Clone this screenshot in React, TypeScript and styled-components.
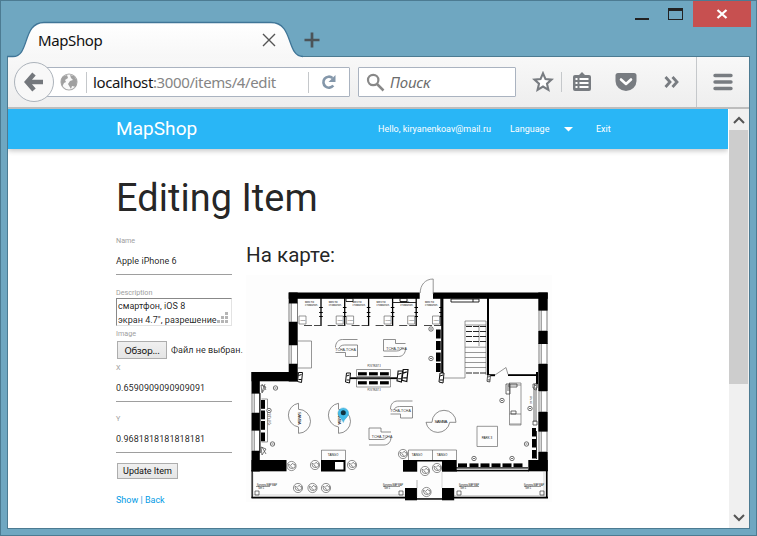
import React from 'react';
import styled, { createGlobalStyle, css } from 'styled-components';

const GlobalStyle = createGlobalStyle`
  * { box-sizing: border-box; }
  body { margin: 0; background: #6fa7c1; overflow: hidden; }
`;

const uiFont = css`font-family: "Noto Sans", "Open Sans", sans-serif;`;

const Window = styled.div`
  width: 757px; height: 536px; display: flex; flex-direction: column;
  background: #6fa7c1; border: 1px solid #4c7b92; padding: 0 6px 6px;
`;
const TitleBar = styled.div`
  height: 55px; flex: none; display: flex; justify-content: space-between; align-items: flex-start;
`;
const TabStrip = styled.div`display: flex; height: 56px; padding-top: 19px;`;
const TabShape = styled.div`
  position: relative; width: 302px; height: 37px; z-index: 1;
`;
const TabOutline = styled.svg`position: absolute; left: 0; top: 0; overflow: visible;`;
const TabContent = styled.div`
  position: relative; display: flex; align-items: center; justify-content: space-between;
  padding: 0 33px 0 31px; height: 40px;
`;
const TabTitle = styled.span`
  ${uiFont} font-size: 15px; line-height: 20px; letter-spacing: -.4px; color: #111;
`;
const NewTab = styled.svg`margin: 12px 0 0 -5px;`;
const WindowButtons = styled.div`display: flex; height: 26px; margin-right: -1px;`;
const CloseButton = styled.div`
  width: 58px; height: 26px; background: #c75050;
  display: flex; align-items: center; justify-content: center;
`;
const Client = styled.div`
  flex: 1; min-height: 0; border: 1px solid #4c7b92; display: flex; flex-direction: column; background: #fff;
`;
const Toolbar = styled.div`
  height: 52px; flex: none; display: flex; align-items: center;
  background: linear-gradient(#f8f8f8, #eeeeee); border-bottom: 2px solid #bdbdbd;
`;
const BackButton = styled.div`
  width: 40px; height: 40px; margin-left: 6px; flex: none; border: 1px solid #acb3bb; border-radius: 50%;
  background: #f8f8f8; display: flex; align-items: center; justify-content: center; z-index: 1;
`;
const Field = styled.div<{ $w: number; $ml: number; $pl: number }>`
  width: ${p => p.$w}px; margin-left: ${p => p.$ml}px; padding-left: ${p => p.$pl}px;
  height: 30px; flex: none; background: #fff; border: 1px solid #aab3c0; border-radius: 1px;
  display: flex; align-items: center;
`;
const Address = styled.span`
  ${uiFont} font-size: 15px; line-height: 24px; letter-spacing: -.38px; color: #858585; width: 215px; white-space: nowrap;
  b { font-weight: 400; color: #151515; }
`;
const Placeholder = styled.span`
  ${uiFont} font-size: 15px; line-height: 24px; font-style: italic; color: #6c6c6c; margin-left: 5px; letter-spacing: -.2px;
`;
const Divider = styled.i<{ $h: number; $m: string }>`
  width: 1px; flex: none; height: ${p => p.$h}px; margin: ${p => p.$m}; background: #c5c8cb;
`;
const ToolIcon = styled.svg<{ $ml: number }>`flex: none; margin-left: ${p => p.$ml}px;`;

const Viewport = styled.div`flex: 1; min-height: 0; display: flex;`;
const Page = styled.div`
  width: 720px; height: 419px; overflow: hidden; background: #fff;
  font-family: Roboto, sans-serif; color: rgba(0,0,0,.87);
`;
const NavBar = styled.nav`
  height: 40px; background: #29b6f6; color: #fff; display: flex; align-items: center;
  padding-left: 108px; box-shadow: 0 2px 5px rgba(0,0,0,.22); font-size: 9px;
`;
const Brand = styled.div`font-size: 19px; line-height: 42px; letter-spacing: .06px; width: 262px;`;
const NavItem = styled.div<{ $w: number }>`width: ${p => p.$w}px; white-space: nowrap; line-height: 40px;`;
const Main = styled.main`padding: 0 0 0 108px;`;
const Title = styled.h1`margin: 24px 0 0; height: 51px; font-size: 37.9px; line-height: 51px; font-weight: 400; letter-spacing: .06px;`;
const Columns = styled.div`display: flex; align-items: flex-start;`;
const Form = styled.form`width: 129px; flex: none; padding-top: 12px; display: flex; flex-direction: column; align-items: flex-start;`;
const Label = styled.label<{ $mt: number }>`
  margin-top: ${p => p.$mt}px; height: 10px; line-height: 10px; font-size: 7.2px; color: #9e9e9e;
`;
const Input = styled.div`
  width: 116px; height: 29px; padding-top: 1px; line-height: 28px; border-bottom: 1px solid #9e9e9e;
  font-size: 9px; letter-spacing: .04px;
`;
const Area = styled.div`
  position: relative; width: 116px; height: 28px; padding-left: 1px; overflow: hidden;
  border: 1px solid #e3e3e3; border-top-color: #888; border-left-color: #888;
  font-size: 9px; line-height: 14px; letter-spacing: .03px; white-space: nowrap;
`;
const Grip = styled.svg`position: absolute; right: 3px; bottom: 2px;`;
const FileRow = styled.div`
  display: flex; align-items: center; margin: 2px 0 0 1px; white-space: nowrap; font-size: 9px; letter-spacing: .04px;
`;
const Button = styled.div<{ $w: number; $h: number; $ui?: boolean }>`
  width: ${p => p.$w}px; height: ${p => p.$h}px; margin-right: 4px; border: 1px solid #adadad;
  background: linear-gradient(#f0f0f0, #e5e5e5); color: #111; letter-spacing: 0;
  display: flex; align-items: center; justify-content: center; white-space: nowrap;
  ${p => p.$ui ? css`${uiFont} font-size: 9.5px; letter-spacing: -.2px;` : css`font-size: 9px;`}
`;
const SubmitRow = styled.div`margin: 10px 0 0 1px;`;
const Links = styled.div`margin-top: 14px; font-size: 9px; line-height: 14px; color: #2196dd; a { color: #039be5; }`;
const MapColumn = styled.section`width: 312px;`;
const MapTitle = styled.h4`margin: 17px 0 0 0; padding-left: 1px; height: 28px; font-size: 20.6px; line-height: 28px; font-weight: 400;`;
const Plan = styled.svg`display: block; margin-top: 6px;`;

const ScrollBar = styled.div`
  width: 20px; height: 419px; margin-left: 1px; background: #f0f0f0; display: flex; flex-direction: column; align-items: flex-start;
`;
const ScrollButton = styled.div`width: 19px; height: 21px; flex: none; display: flex; align-items: center; justify-content: center;`;
const Thumb = styled.div`width: 19px; height: 254px; background: #cdcdcd; margin-bottom: auto;`;

const LINE = '#6a6a6a';

/** Solid wall blocks: x, y, width, height */
const walls = [
  [288.7, 292.5, 131, 6.3], [433, 292.5, 114.7, 6.3],
  [288.7, 292.5, 9, 10.8], [288.7, 322, 9, 23], [288.7, 364, 9, 17.5],
  [251.5, 372, 46, 9.3], [251.5, 372, 8.3, 21.5], [251.5, 413, 8.3, 17.5], [251.5, 451, 8.3, 20.5],
  [251.5, 460, 35, 11.3],
  [538.3, 292.5, 9.4, 18], [538.3, 331, 9.4, 13], [538.3, 364, 9.4, 27], [538.3, 412, 9.4, 19.5], [538.3, 452, 9.4, 19],
  [528.3, 460, 19.4, 11.3],
  [321, 460, 24.5, 11.5], [403, 460, 14.2, 11.7], [442, 460, 14.7, 11.7],
  [405, 488, 12, 12.3], [442, 488, 12.2, 12.3],
  [441.2, 298, 2.2, 76], [487, 298, 2, 77], [489, 374.2, 6, 2], [508, 374.2, 29, 1.8], [536, 372, 2, 12],
  [456, 467.3, 72, 1.2], [456, 469.8, 73, 1.6], [417, 460, 25, 1.5], [251.5, 496.7, 154, 1.8], [454, 496.7, 94, 1.8],
  [417, 498.2, 25, 1.5], [251.5, 470, 1.3, 28], [545.9, 470, 1.7, 28],
  [347, 377.3, 50, 1.8], [259.5, 393, 1, 60], [536, 431, .8, 28],
];
const windows: [number, number, number, number][] = [
  [289, 303, 8.5, 19], [289, 345, 8.5, 19], [252, 393, 7.5, 20], [252, 430, 7.5, 21],
  [539, 310, 8, 21], [539, 343, 8, 21], [539, 391, 8, 21], [539, 431, 8, 21],
];
/** Product stands along the walls and on the central island */
const stands = [
  ...[329.5, 341, 352.5, 363].map(y => [436, y, 4.7, 9]),
  ...[400, 410.5, 421, 432.5].map(y => [261, y, 4, 8.8]),
  ...[428, 439, 450].map(y => [532, y, 4, 8.5]),
  ...[458, 469.5, 480.5, 491.5, 502.5, 513.5].map(x => [x, 463.4, 9, 3.7]),
  ...[358, 369, 380].flatMap(x => [[x, 372.2, 8.8, 3.2], [x, 381.2, 8.8, 3.2]]),
];
const chairs = [
  [291.5, 466], [315, 465], [352, 465], [298, 488], [312.5, 488], [326, 488],
  [403, 454], [437, 468], [425, 471], [426.5, 492],
];
const markers = [
  [275.5, 388], [269, 410.5], [272.5, 444], [431, 329], [431, 358.5],
  [502, 400.5], [530, 408.5], [526.5, 444], [474, 458.5], [512, 458.5],
];

function Chair({ x, y }: { x: number; y: number }) {
  return (
    <g transform={`translate(${x} ${y})`} fill="none" stroke="#555" strokeWidth=".65">
      <circle r="4.6" />
      <path d="M-3-1.8l2.2 1.2 2-2.2 1.4 1.7 1-.6v3l-2.6 1.3-2.8-.6-1-2zM-1 .2l2.4 1.7" />
    </g>
  );
}
function Samba({ x, y, turn }: { x: number; y: number; turn?: boolean }) {
  return (
    <g transform={`translate(${x} ${y}) ${turn ? 'rotate(90)' : ''}`}>
      <path d="M-9 0H-15A12 12 0 0 0 8.7 0M-9 0A12 12 0 0 1 15 0H8.7" fill="none" stroke={LINE} strokeWidth=".75" />
      <text x="0" y=".5" fontSize="4.4" textAnchor="middle" fill="#222" textLength="13">SAMBA</text>
    </g>
  );
}
function Tcha({ x, y, flip }: { x: number; y: number; flip?: boolean }) {
  return (
    <g transform={`translate(${x} ${y})`}>
      <path transform={flip ? 'rotate(180)' : undefined}
        d="M11-9H-4C-8-9-11-6-11-1M11-3.500H-2C-5-3.500-7-2-7.500 0M-11 4H-1V8H11V-3.500"
        fill="none" stroke={LINE} strokeWidth=".75" />
      <text x={flip ? 2 : -1} y="2.400" fontSize="4.300" textAnchor="middle" fill="#333" textLength="20.500" lengthAdjust="spacingAndGlyphs">TCHA-TCHA</text>
    </g>
  );
}
function Pillar({ x, y, s = 1 }: { x: number; y: number; s?: number }) {
  return <path transform={`translate(${x} ${y}) scale(${s})`} d="M1 0L5 0 4 10 0 9zM1 3l3-1M1 7l3 0" fill="#fff" stroke="#111" strokeWidth="1" />;
}

function FloorPlan() {
  return (
    <Plan width="310" height="230" viewBox="245 275 310 230" fontFamily="Liberation Sans, Arial, sans-serif">
      <rect x="246" y="275" width="306" height="227" fill="#fdfdfd" />
      <g fill="#fff" stroke="#444" strokeWidth=".7">
        {windows.map(([x, y, w, h]) => <path key={`${x}-${y}`} d={`M${x} ${y}h${w}v${h}h${-w}zM${x + 2.2} ${y}v${h}`} />)}
      </g>
      <g fill="#000">
        {walls.map(([x, y, w, h], i) => <rect key={i} x={x} y={y} width={w} height={h} />)}
        {stands.map(([x, y, w, h], i) => <rect key={i} x={x} y={y} width={w} height={h} />)}
      </g>
      <rect x="335" y="462" width="8.5" height="7.5" fill="#fff" />

      {[321, 344.7, 368.6, 392.6, 416.2, 441].map((x, i) => (
        <g key={x}>
          <path d={`M${x} 298V326`} stroke="#000" strokeWidth="1.3" />
          <path d={`M${x - 1.8} 307.5h3.6m-3.6 5h3.6m-3.6 4h3.6`} stroke="#000" strokeWidth="1" />
          <path d={`M${x - 17} 325.5h17`} stroke="#333" strokeWidth=".9" strokeDasharray="8 2" />
          <path d={i === 0 || i === 2 ? `M${x - 22} 316h7v8h-7z` : `M${x - 8.5} 316h7v8h-7z`} fill="#fff" stroke={LINE} strokeWidth=".7" />
          <text x={i === 0 || i === 2 ? x - 21.3 : x - 7.8} y="321" fontSize="2.4" textLength="5.5" lengthAdjust="spacingAndGlyphs">ALUM</text>
          <text x={x - 16} y="303" fontSize="2.8" fill="#222" textLength="9" lengthAdjust="spacingAndGlyphs">место</text>
          <text x={x - 16} y="305.800" fontSize="2.8" fill="#222" textLength="13" lengthAdjust="spacingAndGlyphs">стоматол.</text>
        </g>
      ))}
      <g fill="#fff" stroke="#111" strokeWidth=".9">
        <path d="M346 298.5h7v3h-7zM400 298.5h7v3h-7zM451 299h28v3h-28zM473 299v3M392 302.5h24" />
      </g>
      <g fill="none" stroke={LINE} strokeWidth=".7">
        <path d="M298 341h13.5v27H298M433.2 294V279c-8 0-13 6-13 14M495 375l11-7.5 2 7" />
        <path d="M465 321h21v4h-21zM465 325v53M486 325v50M479 325v21M440 378h25" />
        <path d="M465 347.2h21M465 352.5h21M465 357.5h21M465 362.5h21M465 367.5h21" />
        <path d="M356.5 369.5h34v7h-34zM356.5 379h34v8h-34z" />
        <path d="M267.5 399v43h-6M267.5 399h-6M509 383h12v42h-11.500V383M509.500 385h11.500M509.500 414h11.500M510 424h11" />
        <path d="M477 426.300h20.500v20.200H477z" />
        <path d="M321.500 450.200h24v10M321.500 450v10M408.500 450h48v10M432.500 450v10M408.500 450v10" />
        <path d="M253 473v22H405M417 497v-17M544 472v25M454 495.500h91M417 480v8M442 472v16" strokeOpacity=".4" />
      </g>
      <path d="M466 326.500h20M466 331.500h20M466 336.500h20M466 341.500h20M466 373h20" stroke="#111" strokeWidth=".9" strokeDasharray="6 1" />
      <path d="M534 388v34M536 388v34M533 384h4v4h-4zM533 421h4v4h-4zM506 384h4v10h-4zM507 386h3M507 388h3M507 390h3M511 411h5v3h-5zM509 384h8v3h-8z" fill="none" stroke="#444" strokeWidth=".8" />
      <g fill="none" stroke="#444" strokeWidth=".7">
        <path d="M261 385l5 2-4 6zM261 447l5 2-4 6z" />
        <path d="M262 384l4 6M265 384l-3 8M262 447l4 7M255 491h4v4h-4zM399 491h4v4h-4zM457 491h4v4h-4zM540 491h4v4h-4z" />
      </g>
      <Pillar x={297.500} y={372.500} />
      <Pillar x={345.500} y={373} />
      <Pillar x={397} y={371} s={1.1} />
      <Pillar x={402} y={369.500} s={1.2} />
      <Pillar x={439} y={373} />
      <Pillar x={487} y={375} s={.7} />
      <Pillar x={534} y={384} s={.6} />

      <Samba x={298.500} y={418.300} turn />
      <Samba x={338.500} y={418.300} turn />
      <Samba x={441} y={422.300} />
      <Tcha x={346.500} y={348.500} />
      <Tcha x={394.500} y={347.500} flip />
      <Tcha x={401.500} y={410} />
      <Tcha x={380} y={436} flip />

      {chairs.map(([x, y]) => <Chair key={`${x}${y}`} x={x} y={y} />)}
      <g fill="#fff" stroke="#333" strokeWidth=".7">
        {markers.map(([x, y]) => <g key={`${x}${y}`}><circle cx={x} cy={y} r="2.200" /><path d={`M${x - 1} ${y}h2`} /></g>)}
      </g>
      <g fontSize="3" fill="#111" textAnchor="middle">
        <text x="333" y="455.800">TANGO</text><text x="417" y="455.800">TANGO</text><text x="442" y="455.800">TANGO</text>
        <text x="374" y="367.200" textLength="13" lengthAdjust="spacingAndGlyphs">POS TRUST 3</text>
        <text x="374" y="390.800" textLength="13" lengthAdjust="spacingAndGlyphs">POS TRUST 3</text>
        <text x="487" y="439">PARK 3</text>
        <text transform="translate(271 419) rotate(-90)" textLength="13" lengthAdjust="spacingAndGlyphs">POS TRUST 4</text>
        <text transform="translate(532 400) rotate(-90)" textLength="8" lengthAdjust="spacingAndGlyphs">ролл-ап</text>
      </g>
      <g fontSize="2.800" fill="#111">
        {[257, 383, 459, 524].map(x => (
          <g key={x}>
            <text x={x} y="485.500" textLength="20" lengthAdjust="spacingAndGlyphs">Колонна МАР МАР</text>
            <text x={x + 1} y="489.200" textLength="6" lengthAdjust="spacingAndGlyphs">Тип 1</text>
          </g>
        ))}
      </g>
      <path d="M256 486.500h14M383 486.500h17M459 486.500h20M524 486.500h17" stroke="#333" strokeWidth=".5" />
      <path d="M343.300 422.500c-.7-4-5.300-5.200-5.300-9.300a5.300 5.300 0 0 1 10.600 0c0 4.100-4.600 5.300-5.300 9.300z" fill="#45bce8" stroke="#3199c5" strokeWidth=".4" />
      <circle cx="343.300" cy="412.800" r="2.500" fill="#123340" />
    </Plan>
  );
}

export default function App() {
  return (
    <>
      <GlobalStyle />
      <Window>
        <TitleBar>
          <TabStrip>
            <TabShape>
              <TabOutline width="302" height="38" viewBox="0 0 302 38">
                <defs><linearGradient id="tab" x2="0" y2="1"><stop stopColor="#fff" /><stop offset="1" stopColor="#f7f7f7" /></linearGradient></defs>
                <path d="M1 38V36.500H6C23 36.500 15 2.500 37 2.500H264C287 2.500 279 36.500 296 36.500V38z" fill="url(#tab)" />
                <path d="M0 36.500H6C23 36.500 15 2.500 37 2.500H264C287 2.500 279 36.500 296 36.500" fill="none" stroke="#3f7597" strokeWidth="1.300" />
              </TabOutline>
              <TabContent>
                <TabTitle>MapShop</TabTitle>
                <svg width="14" height="14" viewBox="0 0 14 14"><path d="M1 1l12 12M13 1L1 13" stroke="#555" strokeWidth="1.400" /></svg>
              </TabContent>
            </TabShape>
            <NewTab width="16" height="16" viewBox="0 0 16 16"><path d="M8 .5v15M.5 8h15" stroke="#4b5358" strokeWidth="2.700" /></NewTab>
          </TabStrip>
          <WindowButtons>
            <svg width="59" height="26" viewBox="634 1 59 26" shapeRendering="crispEdges">
              <path d="M635 18h14v2h-14z" fill="#222" /><path d="M668 8h15v12h-15zM669 11v8h13v-8z" fill="#222" fillRule="evenodd" />
            </svg>
            <CloseButton><svg width="12" height="10" viewBox="0 0 12 10"><path d="M1.500 1l9 8M10.500 1l-9 8" stroke="#fff" strokeWidth="2.300" /></svg></CloseButton>
          </WindowButtons>
        </TitleBar>
        <Client>
          <Toolbar>
            <BackButton><svg width="20" height="20" viewBox="0 0 20 20"><path d="M10 2L3 10l7 8M3.500 10H19" fill="none" stroke="#73777c" strokeWidth="4.500" /></svg></BackButton>
            <Field $w={304} $ml={-8} $pl={13}>
              <svg width="18" height="18" viewBox="0 0 18 18">
                <circle cx="9" cy="9" r="8" fill="#fafafa" stroke="#aaa" strokeWidth="1.100" />
                <path d="M2 4l5-2 1 3-3 2 1 2-2 1-2 4L1 9zM10 2l4 1 3 5-1 6-4-1-1 3-3-5 2-3 3-1-2-2z" fill="#a0a0a0" />
              </svg>
              <Divider $h={21} $m="0 6px 0 8px" />
              <Address><b>localhost</b>:3000/items/4/edit</Address>
              <Divider $h={21} $m="0 12px 0 0" />
              <svg width="16" height="16" viewBox="0 0 16 16"><path d="M12.300 11.500A5.500 5.500 0 1 1 11.500 4" fill="none" stroke="#8497aa" strokeWidth="2.600" /><path d="M14.500 1v7H7.500z" fill="#8497aa" /></svg>
            </Field>
            <Field $w={158} $ml={8} $pl={7}>
              <svg width="19" height="19" viewBox="0 0 19 19"><circle cx="7.200" cy="7" r="5.200" fill="none" stroke="#888" strokeWidth="2.200" /><path d="M11 11l6.500 6.500" stroke="#888" strokeWidth="2.500" /></svg>
              <Placeholder>Поиск</Placeholder>
            </Field>
            <ToolIcon $ml={16} width="22" height="22" viewBox="0 0 22 22"><path d="M11 2.300l2.500 5.800 6.100.5-4.600 4.100 1.400 6.200L11 15.600l-5.400 3.300L7 12.700 2.400 8.600l6.100-.5z" fill="#fff" stroke="#787c81" strokeWidth="2.100" /></ToolIcon>
            <Divider $h={20} $m="0 0 0 7px" />
            <ToolIcon $ml={10} width="20" height="20" viewBox="0 0 20 20"><path d="M3 3h4l3-3 3 3h4q2 0 2 2v12q0 2-2 2H3q-2 0-2-2V5q0-2 2-2z" fill="#787c81" /><path d="M3.500 7h2M3.500 11h2M3.500 15h2M7.500 7H16.500M7.500 11H16.500M7.500 15H16.500" stroke="#fff" strokeWidth="1.900" /></ToolIcon>
            <ToolIcon $ml={23} width="22" height="20" viewBox="0 0 22 20"><path d="M3 1h16q2.500 0 2.500 2.500V9a10.500 10 0 0 1-21 0V3.500Q.5 1 3 1z" fill="#787c81" /><path d="M6 7.500l5 4.500 5-4.500" fill="none" stroke="#fff" strokeWidth="2.600" strokeLinecap="round" strokeLinejoin="round" /></ToolIcon>
            <ToolIcon $ml={27} width="16" height="14" viewBox="0 0 16 14"><path d="M1.500 2L6 7l-4.500 5M8.500 2L13 7l-4.500 5" fill="none" stroke="#787c81" strokeWidth="2.800" /></ToolIcon>
            <Divider $h={50} $m="0 0 0 16px" />
            <ToolIcon $ml={16} width="20" height="20" viewBox="0 0 20 20"><path d="M2 3.500h16M2 10h16M2 16.500h16" stroke="#787c81" strokeWidth="3.400" strokeLinecap="round" /></ToolIcon>
          </Toolbar>
          <Viewport>
            <Page>
              <NavBar>
                <Brand>MapShop</Brand>
                <NavItem $w={132}>Hello, kiryanenkoav@mail.ru</NavItem>
                <NavItem $w={54}>Language</NavItem>
                <NavItem $w={32}><svg width="9" height="5" viewBox="0 0 9 5"><path d="M0 0h9L4.500 4.500z" fill="#fff" /></svg></NavItem>
                <NavItem $w={30}>Exit</NavItem>
              </NavBar>
              <Main>
                <Title>Editing Item</Title>
                <Columns>
                  <Form>
                    <Label $mt={0}>Name</Label>
                    <Input>Apple iPhone 6</Input>
                    <Label $mt={13}>Description</Label>
                    <Area>смартфон, iOS 8<br />экран 4.7", разрешение<Grip width="11" height="11" viewBox="0 0 11 11"><path d="M8 0h3v3H8zM4 4h3v3H4zM8 4h3v3H8zM0 8h3v3H0zM4 8h3v3H4zM8 8h3v3H8z" fill="#b5b5b5" /></Grip></Area>
                    <Label $mt={3}>Image</Label>
                    <FileRow><Button $w={50} $h={18} $ui>Обзор...</Button>Файл не выбран.</FileRow>
                    <Label $mt={4}>X</Label>
                    <Input>0.6590909090909091</Input>
                    <Label $mt={12}>Y</Label>
                    <Input>0.9681818181818181</Input>
                    <SubmitRow><Button $w={61} $h={16}>Update Item</Button></SubmitRow>
                    <Links><a>Show</a> | <a>Back</a></Links>
                  </Form>
                  <MapColumn>
                    <MapTitle>На карте:</MapTitle>
                    <FloorPlan />
                  </MapColumn>
                </Columns>
              </Main>
            </Page>
            <ScrollBar>
              <ScrollButton><svg width="12" height="8" viewBox="0 0 12 8"><path d="M1 7l5-5 5 5" fill="none" stroke="#555" strokeWidth="2" /></svg></ScrollButton>
              <Thumb />
              <ScrollButton><svg width="12" height="8" viewBox="0 0 12 8"><path d="M1 1l5 5 5-5" fill="none" stroke="#555" strokeWidth="2" /></svg></ScrollButton>
            </ScrollBar>
          </Viewport>
        </Client>
      </Window>
    </>
  );
}
